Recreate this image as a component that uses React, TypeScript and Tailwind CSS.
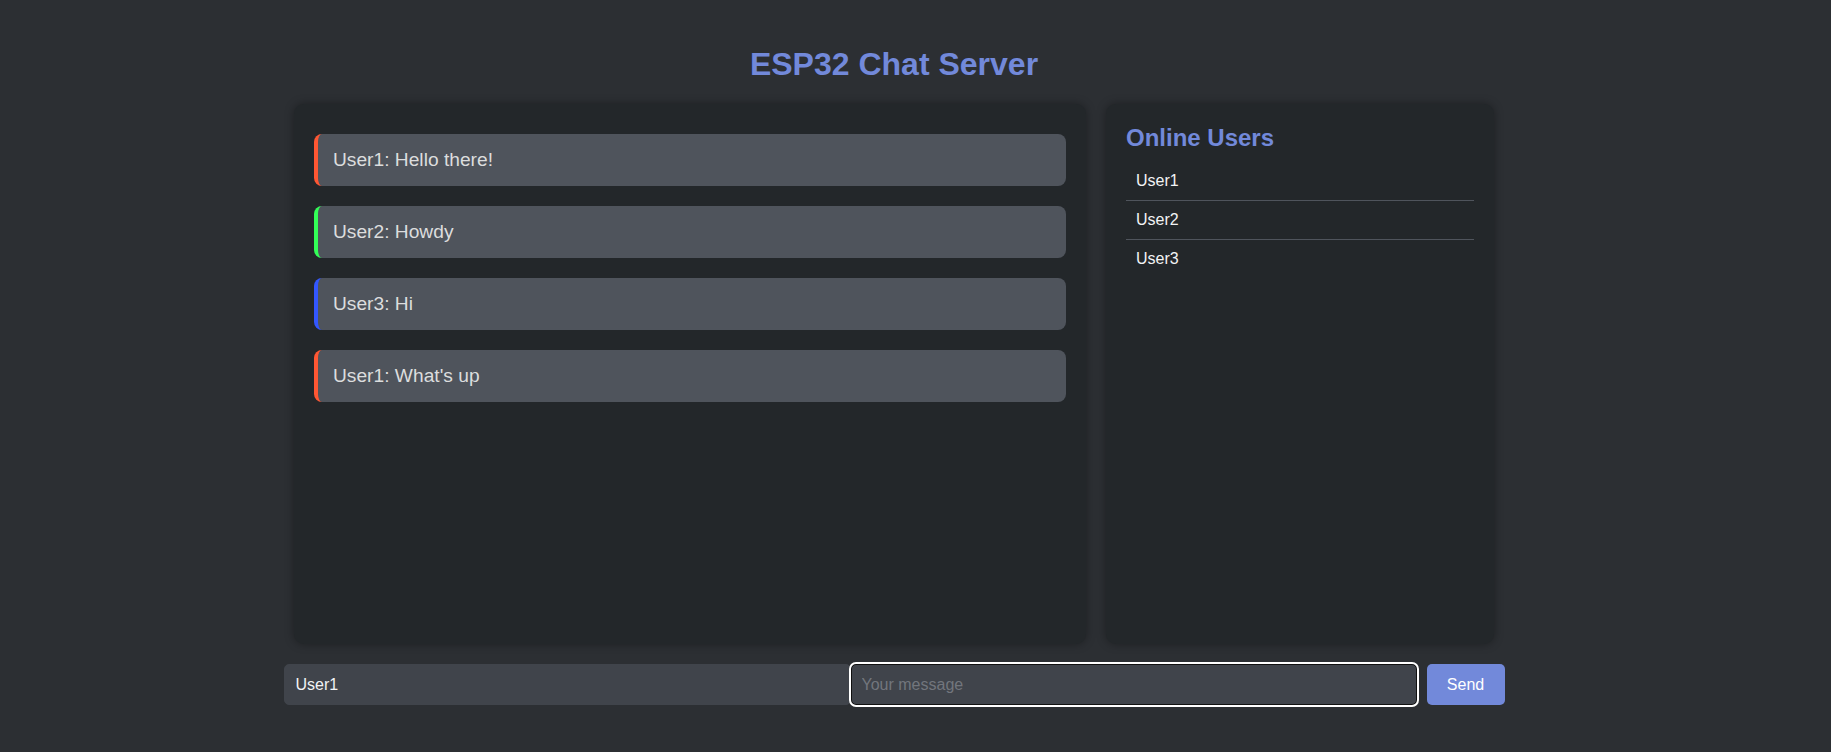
import React from "react";

const messages = [
  { text: "User1: Hello there!", color: "border-[#ff5733]" },
  { text: "User2: Howdy", color: "border-[#33ff57]" },
  { text: "User3: Hi", color: "border-[#3357ff]" },
  { text: "User1: What's up", color: "border-[#ff5733]" },
];

const users = ["User1", "User2", "User3"];

export default function App() {
  return (
    <div className="min-h-screen bg-[#2c2f33] font-['Liberation_Sans',Arial,sans-serif] text-[#dcddde]">
      <div className="w-[1788px]">
        <h1 className="pt-[46px] text-center text-[32px] font-bold leading-[37px] text-[#7289da]">
          ESP32 Chat Server
        </h1>
        <div className="mx-auto mt-[21px] flex w-[1200px] gap-[20px]">
          <div className="h-[540px] w-[792px] rounded-[10px] bg-[#23272a] p-5 shadow-[0_0_10px_rgba(0,0,0,0.35)]">
            <div className="flex flex-col gap-5 pt-[10px]">
              {messages.map((m, i) => (
                <div
                  key={i}
                  className={`rounded-lg border-l-4 ${m.color} bg-[#4f545c] px-[15px] py-[15px] text-[19.2px] leading-[22px] text-[#dcddde]`}
                >
                  {m.text}
                </div>
              ))}
            </div>
          </div>
          <div className="h-[540px] w-[388px] rounded-[10px] bg-[#23272a] p-5 shadow-[0_0_10px_rgba(0,0,0,0.35)]">
            <h2 className="mb-[10px] text-[24px] font-bold leading-[28px] text-[#7289da]">Online Users</h2>
            <ul>
              {users.map((u, i) => (
                <li
                  key={u}
                  className={`px-[10px] py-[10px] text-[16px] leading-[18px] text-[#f2f3f5] ${
                    i < users.length - 1 ? "border-b border-[#4f545c]" : ""
                  }`}
                >
                  {u}
                </li>
              ))}
            </ul>
          </div>
        </div>
        <div className="mx-auto mt-5 flex w-[1221px] items-stretch">
          <input
            defaultValue="User1"
            className="h-[41px] w-[567px] rounded-[5px] border border-[#40444b] bg-[#40444b] px-[11px] text-[16px] text-[#f2f3f5] outline-none"
          />
          <input
            placeholder="Your message"
            className="h-[41px] w-[566px] rounded-[5px] border border-[#111] bg-[#40444b] px-[10px] text-[16px] text-[#f2f3f5] outline-2 outline-offset-0 outline-white outline-solid placeholder:text-[#72767d]"
          />
          <button className="ml-[10px] h-[41px] w-[78px] rounded-[5px] bg-[#7289da] text-[16px] text-white">
            Send
          </button>
        </div>
      </div>
    </div>
  );
}
